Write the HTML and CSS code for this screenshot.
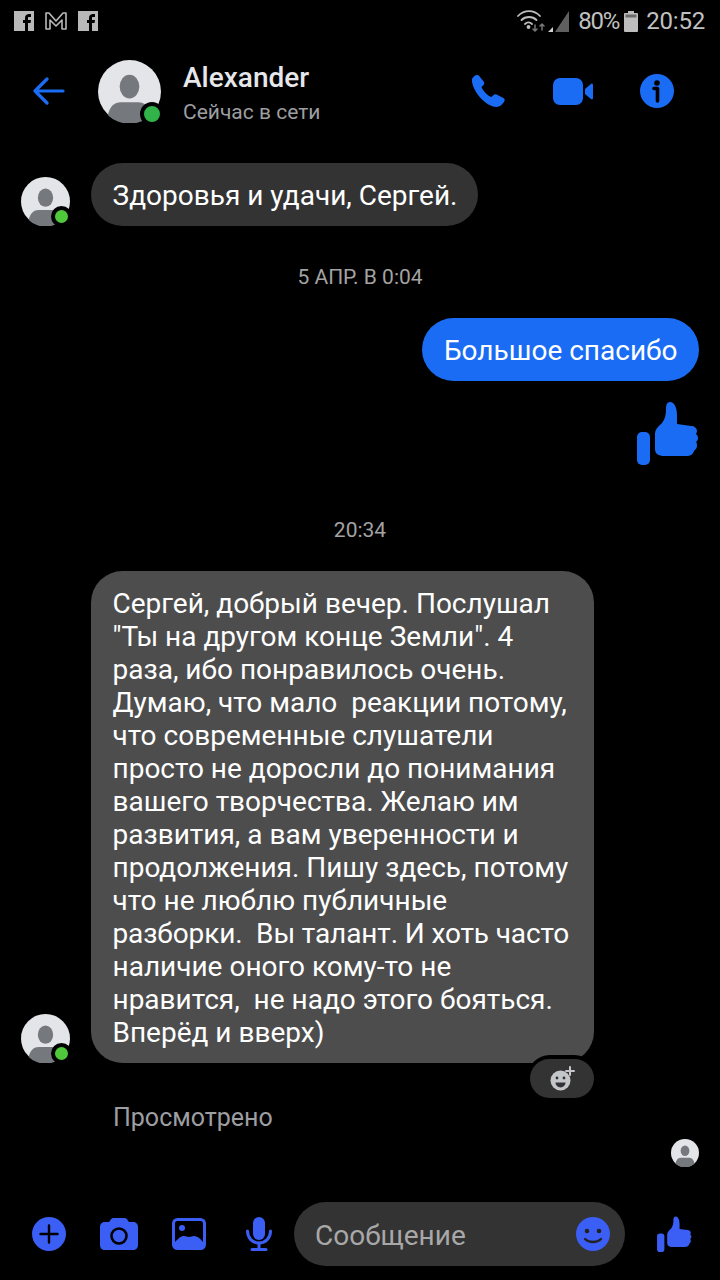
FILE: index.html
```html
<!DOCTYPE html>
<html lang="ru">
<head>
<meta charset="utf-8">
<title>Alexander</title>
<link rel="stylesheet" href="styles.css">
</head>
<body>
<svg class="defs" width="0" height="0" aria-hidden="true">
  <symbol id="avatar" viewBox="0 0 64 64">
    <circle cx="32" cy="32" r="32" fill="#e4e5e9"/>
    <ellipse cx="32" cy="27" rx="10" ry="12" fill="#75787c"/>
    <path d="M10 56c2-9 7-13 13-13h18c6 0 11 4 13 13a32 32 0 0 1-44 0z" fill="#75787c"/>
  </symbol>
  <symbol id="thumb" viewBox="0 0 62 64">
    <rect x="0" y="31" width="13" height="33" rx="5"/>
    <path d="M18 33c0-5 4-8 7-11 3-4 4-8 4-14 0-4 1-7 4-7 5 0 7 7 7 13v9l14 2c3 0 6 2 6 5 0 1-.5 2-1 3 1 1 2 2 2 4 0 2-1 3-2 4 1 1 1 2 1 4 0 2-2 4-3 5-1 3-3 5-8 5H27c-5 0-9-2-9-7z"/>
  </symbol>
</svg>

<header class="status">
  <div class="status-left">
    <svg class="notif" viewBox="0 0 20 20"><rect width="20" height="20" fill="#b9b9b9"/><path d="M11 20v-8h-2v-3h2V7c0-3 2-4 4-4h2v3h-2c-1 0-1 .5-1 1v2h3l-.5 3H14v8z" fill="#000"/></svg>
    <svg class="notif" viewBox="0 0 24 20"><path d="M2 18V2h3l7 8 7-8h3v16h-4V9l-6 6-6-6v9z" fill="none" stroke="#b9b9b9" stroke-width="1.6" stroke-linejoin="round"/></svg>
    <svg class="notif" viewBox="0 0 20 20"><rect width="20" height="20" fill="#b9b9b9"/><path d="M11 20v-8h-2v-3h2V7c0-3 2-4 4-4h2v3h-2c-1 0-1 .5-1 1v2h3l-.5 3H14v8z" fill="#000"/></svg>
  </div>
  <div class="status-right">
    <svg class="wifi" viewBox="0 0 28 22" fill="none" stroke="#bdbdbd" stroke-width="1.800" stroke-linecap="round">
      <path d="M1 6c6-6.500 16-6.500 22 0"/><path d="M4.500 10c4-4 11-4 15 0"/><path d="M8 14c2-2 5-2 7 0"/>
      <circle cx="11.500" cy="17" r="1" fill="#bdbdbd"/>
      <path d="M18 15v6M16 19l2 2 2-2" stroke="#777" stroke-width="1.500"/><path d="M25 20v-6M23 16l2-2 2 2" stroke="#777" stroke-width="1.500"/>
    </svg>
    <svg class="signal" viewBox="0 0 21 21"><path d="M21 0v21H7z" fill="#5f5f5f"/><path d="M0 21l5-5v5z" fill="#d0d0d0"/></svg>
    <span class="pct">80%</span>
    <svg class="battery" viewBox="0 0 14 21"><path d="M4 0h6v2h3a1 1 0 0 1 1 1v17a1 1 0 0 1-1 1H1a1 1 0 0 1-1-1V3a1 1 0 0 1 1-1h3z" fill="#bdbdbd"/><rect x="1.500" y="3.500" width="11" height="3" fill="#6a6a6a"/></svg>
    <span class="clock">20:52</span>
  </div>
</header>

<nav class="topbar">
  <svg class="back" viewBox="0 0 32 28" fill="none" stroke="#1a6cf5" stroke-width="3.200" stroke-linecap="round" stroke-linejoin="round"><path d="M14 2L2 14l12 12M2 14h28"/></svg>
  <div class="avatar-wrap avatar-lg">
    <svg class="avatar"><use href="#avatar"/></svg>
    <span class="presence"></span>
  </div>
  <div class="peer">
    <div class="peer-name">Alexander</div>
    <div class="peer-sub">Сейчас в сети</div>
  </div>
  <div class="actions">
    <svg class="act-phone" viewBox="0 0 34 34"><path d="M1 5c1-2 3-4 5-4 1 0 2 .5 3 2l4 5c.5 1 .3 2-.5 3l-2 2c1 3 6 9 10 10l2-2c1-1 2-1 3-.5l6 3c2 1 2.500 2 2 3.500-1 2-4 6-8 6C15 33 0 16 1 5z" fill="#1a6cf5"/></svg>
    <svg class="act-video" viewBox="0 0 40 27"><rect width="30" height="27" rx="7" fill="#1a6cf5"/><path d="M32 11l6-5c1-1 2 0 2 1v13c0 1-1 2-2 1l-6-5z" fill="#1a6cf5"/></svg>
    <svg class="act-info" viewBox="0 0 34 34"><circle cx="17" cy="17" r="17" fill="#1a6cf5"/><circle cx="17" cy="9" r="2.800" fill="#000"/><path d="M14 14.500h3.500V27" stroke="#000" stroke-width="3.600" fill="none" stroke-linecap="round" stroke-linejoin="round"/></svg>
  </div>
</nav>

<main class="thread">
  <div class="row row-first">
    <div class="avatar-wrap avatar-md">
      <svg class="avatar"><use href="#avatar"/></svg>
      <span class="presence"></span>
    </div>
    <div class="bubble bubble-in-dark">Здоровья и удачи, Сергей.</div>
  </div>

  <div class="stamp stamp-a">5 АПР. В 0:04</div>

  <div class="row row-out">
    <div class="bubble bubble-out">Большое спасибо</div>
  </div>
  <div class="row row-out row-like">
    <svg class="like-big"><use href="#thumb"/></svg>
  </div>

  <div class="stamp stamp-b">20:34</div>

  <div class="row row-long">
    <div class="avatar-wrap avatar-md">
      <svg class="avatar"><use href="#avatar"/></svg>
      <span class="presence"></span>
    </div>
    <div class="bubble-stack">
      <div class="bubble bubble-in-long">Сергей, добрый вечер. Послушал<br>"Ты на другом конце Земли". 4<br>раза, ибо понравилось очень.<br>Думаю, что мало&nbsp; реакции потому,<br>что современные слушатели<br>просто не доросли до понимания<br>вашего творчества. Желаю им<br>развития, а вам уверенности и<br>продолжения. Пишу здесь, потому<br>что не люблю публичные<br><span class="tight">разборки.&nbsp; Вы талант. И хоть часто</span><br>наличие оного кому-то не<br>нравится,&nbsp; не надо этого бояться.<br>Вперёд и вверх)</div>
      <div class="react">
        <svg viewBox="0 0 26 26"><circle cx="11.500" cy="14.500" r="10" fill="#c4c6ca"/><circle cx="8" cy="12" r="1.400" fill="#333"/><circle cx="15" cy="12" r="1.400" fill="#333"/><path d="M6.500 16.500h10a5 5 0 0 1-10 0z" fill="#333"/><path d="M21 1v8M17 5h8" stroke="#c4c6ca" stroke-width="2" stroke-linecap="round"/></svg>
      </div>
    </div>
  </div>

  <div class="seen">Просмотрено</div>
  <div class="seen-row"><svg class="avatar-seen"><use href="#avatar"/></svg></div>
</main>

<footer class="composer">
  <svg class="c-plus" viewBox="0 0 34 34"><circle cx="17" cy="17" r="17" fill="#3b5ef5"/><path d="M17 8.500v17M8.500 17h17" stroke="#000" stroke-width="2.400" stroke-linecap="round"/></svg>
  <svg class="c-camera" viewBox="0 0 38 32"><path d="M13 0h12c1 0 2 1 2.500 2L29 4h4c3 0 5 2 5 5v18c0 3-2 5-5 5H5c-3 0-5-2-5-5V9c0-3 2-5 5-5h4l1.500-2C11 1 12 0 13 0z" fill="#3b5ef5"/><circle cx="19" cy="18" r="7.500" fill="none" stroke="#000" stroke-width="2.600"/></svg>
  <svg class="c-image" viewBox="0 0 34 32"><rect x="1.500" y="1.500" width="31" height="29" rx="4" fill="none" stroke="#3b5ef5" stroke-width="3"/><circle cx="10" cy="10" r="3" fill="#3b5ef5"/><path d="M3 24c4-4 6-6 9-6 2 0 3 1 5 1s3-1 5-1c3 0 6 2 9 6v6H3z" fill="#3b5ef5"/></svg>
  <svg class="c-mic" viewBox="0 0 26 34" fill="none"><rect x="7" y="0" width="12" height="23" rx="6" fill="#3b5ef5"/><path d="M1.500 14c0 7 5 12 11.500 12s11.500-5 11.500-12" stroke="#3b5ef5" stroke-width="3" stroke-linecap="round"/><path d="M13 26v6M6 32.500h14" stroke="#3b5ef5" stroke-width="3" stroke-linecap="round"/></svg>
  <div class="input">
    <span class="placeholder">Сообщение</span>
    <svg class="c-smile" viewBox="0 0 34 34"><circle cx="17" cy="17" r="17" fill="#3b5ef5"/><circle cx="11" cy="14" r="2.300" fill="#222"/><circle cx="23" cy="14" r="2.300" fill="#222"/><path d="M9 22c4 4 12 4 16 0" stroke="#222" stroke-width="2.400" fill="none" stroke-linecap="round"/></svg>
  </div>
  <svg class="c-like"><use href="#thumb"/></svg>
</footer>
</body>
</html>
```

FILE: styles.css
```css
* { box-sizing: border-box; }
html, body { margin: 0; padding: 0; }
body {
  width: 720px;
  height: 1280px;
  background: #000;
  font-family: Roboto, "Noto Sans", sans-serif;
  color: #fff;
  display: flex;
  flex-direction: column;
  overflow: hidden;
}
svg { display: block; flex: none; }
.defs { position: absolute; }

.status {
  height: 40px;
  display: flex;
  justify-content: space-between;
  align-items: center;
  padding: 2px 15px 0 14px;
  flex: none;
}
.status-left { display: flex; gap: 10px; align-items: center; }
.notif { width: 20px; height: 20px; }
.notif:nth-child(2) { width: 24px; }
.status-right { display: flex; align-items: center; color: #c0c0c0; font-size: 24px; }
.wifi { width: 28px; height: 22px; margin-right: 3px; }
.signal { width: 21px; height: 21px; margin-right: 9px; }
.pct { width: 40px; margin-right: 6px; letter-spacing: -1.200px; white-space: nowrap; }
.battery { width: 14px; height: 21px; margin-right: 8px; }
.clock { letter-spacing: -.2px; }

.topbar {
  height: 103px;
  display: flex;
  align-items: center;
  flex: none;
  padding: 0 0 1px 33px;
}
.back { width: 32px; height: 28px; margin-right: 33px; }
.avatar-wrap { position: relative; flex: none; }
.avatar { width: 100%; height: 100%; }
.avatar-lg { width: 63px; height: 63px; margin-top: 1px; }
.avatar-md { width: 49px; height: 49px; }
.presence {
  position: absolute;
  border-radius: 50%;
  background: #31b34a;
  border: 4px solid #000;
  box-sizing: content-box;
}
.avatar-lg .presence { width: 16px; height: 16px; right: -3px; bottom: -3px; }
.avatar-md .presence { width: 13px; height: 13px; right: -2px; bottom: -1px; background: #4fc83c; }
.peer { margin-left: 22px; margin-top: 4px; width: 289px; }
.peer-name { font-size: 28px; font-weight: 500; line-height: 32px; color: #e6e7ea; }
.peer-sub { font-size: 21px; line-height: 26px; margin-top: 5px; color: #9d9ea1; }
.actions { display: flex; align-items: center; margin-left: -1px; }
.act-phone { width: 34px; height: 34px; margin-right: 48px; }
.act-video { width: 40px; height: 27px; margin-right: 47px; }
.act-info { width: 34px; height: 34px; }

.thread { flex: 1; padding: 20px 21px 0; display: flex; flex-direction: column; }
.row { display: flex; align-items: flex-end; gap: 21px; }
.row-out { justify-content: flex-end; }
.bubble {
  font-size: 28px;
  line-height: 33px;
  padding: 16px 21.500px 14px;
  border-radius: 31.500px;
}
.bubble-in-dark { background: #333; padding-right: 21px; }
.bubble-out { background: #1a6cf5; }
.bubble-in-long { background: #4d4d4d; width: 503px; padding: 16px 0 14px 21.500px; white-space: nowrap; }
.tight { letter-spacing: -.12px; }
.stamp { text-align: center; font-size: 21px; line-height: 26px; color: #a3a3a3; }
.stamp-a { margin-top: 38px; }
.stamp-b { margin-top: 52px; }
.row-out { margin-top: 28px; }
.row-like { margin-top: 20px; }
.like-big { width: 62px; height: 64px; fill: #1a6cf5; }
.row-long { margin-top: 28px; }
.bubble-stack { position: relative; padding-bottom: 35px; }
.row-long .avatar-wrap { margin-bottom: 35px; }
.react {
  position: absolute;
  right: 0;
  bottom: 0;
  width: 64px;
  height: 39px;
  border-radius: 20px;
  background: #333;
  box-shadow: 0 -2px 0 2px #000;
  display: flex;
  align-items: center;
  justify-content: center;
}
.react svg { width: 26px; height: 26px; }
.seen { margin-left: 92px; font-size: 25px; line-height: 30px; color: #9d9ea1; margin-top: 5px; }
.seen-row { display: flex; justify-content: flex-end; margin-top: 6px; }
.avatar-seen { width: 28px; height: 28px; }

.composer {
  height: 78px;
  padding: 0 28px 14px 32px;
  display: flex;
  align-items: center;
  flex: none;
}
.c-plus { width: 34px; height: 34px; margin-right: 34px; }
.c-camera { width: 38px; height: 32px; margin-right: 34px; }
.c-image { width: 34px; height: 32px; margin-right: 40px; }
.c-mic { width: 26px; height: 34px; margin-right: 22px; }
.input {
  width: 331px;
  height: 64px;
  border-radius: 32px;
  background: #333;
  display: flex;
  align-items: center;
  justify-content: space-between;
  padding: 0 15px 0 21px;
  margin-right: 32px;
}
.placeholder { font-size: 28px; line-height: 34px; padding-top: 3px; color: #a8a8a8; }
.c-smile { width: 34px; height: 34px; }
.c-like { width: 35px; height: 36px; fill: #3b5ef5; }
```
